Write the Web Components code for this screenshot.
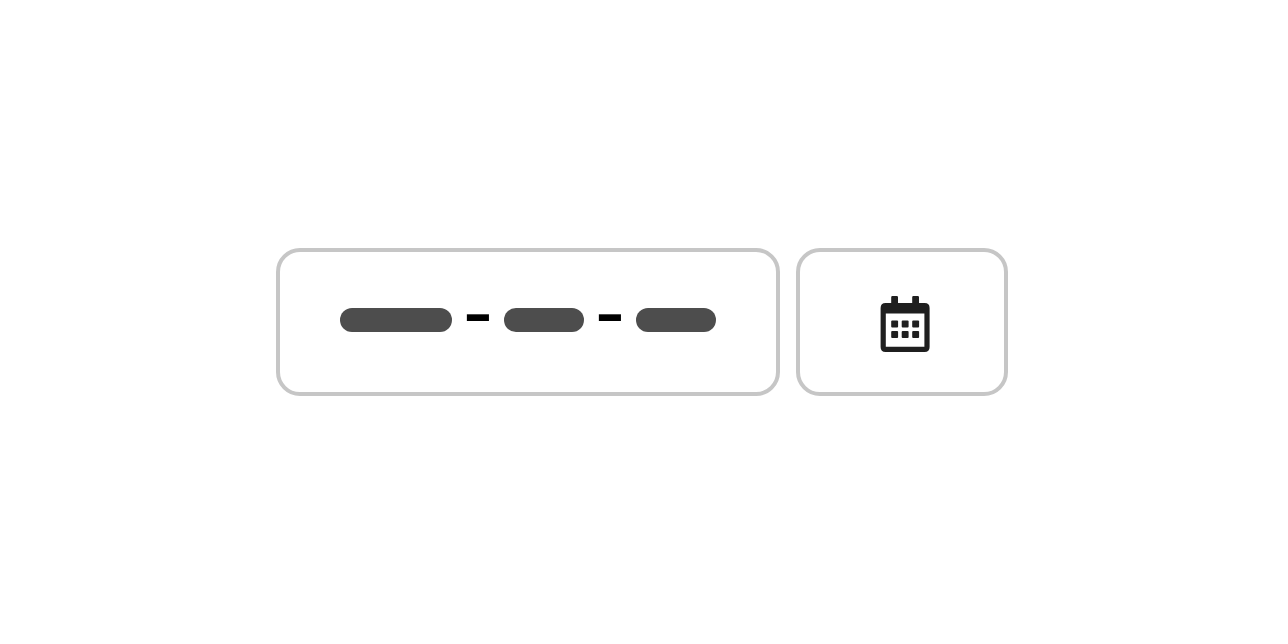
<!DOCTYPE html>
<html lang="en">
<head>
<meta charset="utf-8">
<title>Date input</title>
<style>
html,body{margin:0;height:100%;background:#fff}
</style>
</head>
<body>
<date-picker></date-picker>
<script>
class FieldBox extends HTMLElement {
  constructor(){ super(); this.attachShadow({mode:'open'}).innerHTML = `
  <style>
  :host{display:flex;box-sizing:border-box;height:148px;border:4px solid #c6c6c6;border-radius:24px;background:#fff}
  </style><slot></slot>`; }
}
customElements.define('field-box', FieldBox);

class DatePart extends HTMLElement {
  constructor(){ super(); this.attachShadow({mode:'open'}).innerHTML = `
  <style>
  :host{display:block;width:80px;height:24px;border-radius:12px;background:#4d4d4d}
  :host([wide]){width:112px}
  </style>`; }
}
customElements.define('date-part', DatePart);

class DateSeparator extends HTMLElement {
  constructor(){ super(); this.attachShadow({mode:'open'}).innerHTML = `
  <style>
  :host{display:block;width:52px;height:24px;margin-top:-8px;text-align:center;color:#000;font:84px/24px "DejaVu Sans",sans-serif}
  </style><slot></slot>`; }
}
customElements.define('date-separator', DateSeparator);

class CalendarIcon extends HTMLElement {
  constructor(){ super(); this.attachShadow({mode:'open'}).innerHTML = `
  <style>:host,svg{display:block;width:50px;height:56px}</style>
  <svg viewBox="0 0 50 56" fill="#1f1f1f">
  <path fill-rule="evenodd" d="M11.2 7V1.2Q11.2 0 12.4 0H16.8Q18 0 18 1.2V7H32.2V1.2Q32.2 0 33.4 0H37.8Q39 0 39 1.2V7H44.6Q49.6 7 49.6 12V51Q49.6 56 44.6 56H5.6Q.6 56 .6 51V12Q.6 7 5.6 7ZM5.8 17.6V50.8H44.4V17.6Z"/>
  <rect x="11.2" y="24.4" width="6.9" height="7" rx="1"/><rect x="21.7" y="24.4" width="6.9" height="7" rx="1"/><rect x="32.2" y="24.4" width="6.9" height="7" rx="1"/>
  <rect x="11.2" y="35" width="6.9" height="7" rx="1"/><rect x="21.7" y="35" width="6.9" height="7" rx="1"/><rect x="32.2" y="35" width="6.9" height="7" rx="1"/>
  </svg>`; }
}
customElements.define('calendar-icon', CalendarIcon);

class DatePicker extends HTMLElement {
  constructor(){ super(); this.attachShadow({mode:'open'}).innerHTML = `
  <style>
  :host{display:flex;gap:16px;padding:248px 0 0 276px}
  .date{width:504px;padding:56px 60px 0}
  .button{width:212px;padding-top:44px;padding-left:80px}
  </style>
  <field-box class="date"><date-part wide></date-part><date-separator>-</date-separator><date-part></date-part><date-separator>-</date-separator><date-part></date-part></field-box>
  <field-box class="button" role="button" aria-label="Choose date"><calendar-icon></calendar-icon></field-box>`; }
}
customElements.define('date-picker', DatePicker);
</script>
</body>
</html>
